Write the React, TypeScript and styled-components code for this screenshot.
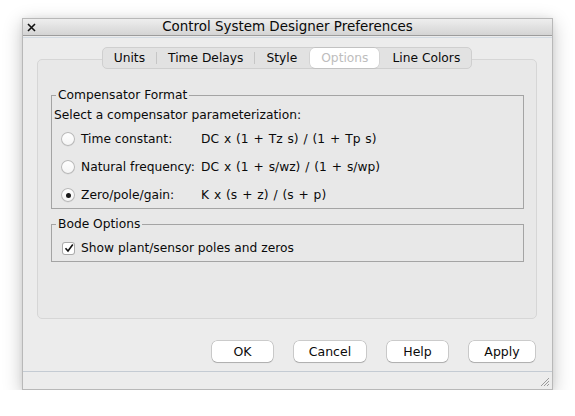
import React from "react";
import styled, { createGlobalStyle } from "styled-components";

const Global = createGlobalStyle`
  html, body { margin: 0; padding: 0; background: #ffffff; }
  body { font-family: "DejaVu Sans", "Open Sans", sans-serif; color: #0a0a0a; }
  * { box-sizing: border-box; }
`;

const Window = styled.div`
  margin: 18px 0 0 22px;
  width: 531px;
  height: 372px;
  border: 1px solid #b8b8b8;
  background: #ececec;
  box-shadow: 0 5px 18px rgba(0, 0, 0, 0.24), 0 0 6px rgba(0, 0, 0, 0.06);
  display: flex;
  flex-direction: column;
`;

const TitleBar = styled.div`
  height: 17px;
  display: grid;
  grid-template-columns: 24px 1fr 24px;
  align-items: center;
  background: linear-gradient(#eeeeee, #d4d4d4);
  border-bottom: 1px solid #9c9c9c;
`;

const CloseBox = styled.div`
  display: flex;
  align-items: center;
  padding-left: 4px;
`;

const Title = styled.div`
  text-align: center;
  font-size: 13.45px;
  line-height: 16px;
  color: #0a0a0a;
`;

const TitleRule = styled.div`
  height: 1px;
  margin-top: 1px;
  background: #d3dbe3;
`;

const Content = styled.div`
  padding: 9px 15px 0 14px;
  display: flex;
  flex-direction: column;
`;

const TabBar = styled.div`
  align-self: center;
  position: relative;
  z-index: 1;
  height: 22px;
  display: flex;
  align-items: center;
  border: 1px solid #cfcfcf;
  border-radius: 5px;
  background: #e2e2e2;
`;

const Tab = styled.div<{ $active?: boolean }>`
  height: 20px;
  padding: 0 11px;
  margin: ${(p) => (p.$active ? "0 2px" : "0")};
  display: flex;
  align-items: center;
  font-size: 12.25px;
  color: ${(p) => (p.$active ? "#bdbdbd" : "#0a0a0a")};
  background: ${(p) => (p.$active ? "#ffffff" : "transparent")};
  border-radius: 5px;
  box-shadow: ${(p) => (p.$active ? "0 0 0 0.5px rgba(0,0,0,0.12)" : "none")};
`;

const TabSep = styled.div`
  width: 1px;
  height: 12px;
  background: #c6c6c6;
`;

const Panel = styled.div`
  margin-top: -10px;
  height: 260px;
  border: 1px solid #d6d6d6;
  border-radius: 5px;
  background: #e8e8e8;
  padding: 28px 12px 0 13px;
  display: flex;
  flex-direction: column;
`;

const Group = styled.fieldset<{ $gapTop?: number }>`
  margin: ${(p) => p.$gapTop ?? 0}px 0 0 0;
  border: 1px solid #a4a4a4;
  padding: 0 2px 5px 2px;
  min-width: 0;
`;

const Legend = styled.legend`
  padding: 0 2px;
  margin-left: 2px;
  font-size: 12.25px;
  line-height: 14px;
`;

const Prompt = styled.div`
  margin-top: 5px;
  font-size: 12.25px;
  line-height: 16px;
`;

const RadioGrid = styled.div`
  margin: 8px 0 0 7px;
  display: grid;
  grid-template-columns: 14px 120px auto;
  grid-auto-rows: 16px;
  column-gap: 6px;
  row-gap: 12px;
  align-items: center;
  font-size: 12.25px;
`;

const RadioLabel = styled.span`
  white-space: nowrap;
`;

const Formula = styled.span`
  margin-left: -6px;
  white-space: nowrap;
  word-spacing: 1px;
`;

const Radio = styled.span<{ $checked?: boolean }>`
  width: 14px;
  height: 14px;
  border-radius: 50%;
  background: linear-gradient(#ffffff, #f4f4f4);
  box-shadow: inset 0 0 0 1px #b7b7b7, 0 0.5px 0.5px rgba(0, 0, 0, 0.08);
  display: flex;
  align-items: center;
  justify-content: center;
  &::after {
    content: "";
    width: 5px;
    height: 5px;
    border-radius: 50%;
    background: ${(p) => (p.$checked ? "#1a1a1a" : "transparent")};
  }
`;

const CheckRow = styled.div`
  margin: 9px 0 0 8px;
  height: 16px;
  display: flex;
  align-items: center;
  gap: 6px;
  font-size: 12.25px;
`;

const CheckBox = styled.span`
  width: 13px;
  height: 13px;
  border-radius: 3px;
  background: #ffffff;
  box-shadow: inset 0 0 0 1px #ababab;
  display: flex;
  align-items: center;
  justify-content: center;
`;

const ButtonRow = styled.div`
  margin-top: 22px;
  padding-right: 2px;
  display: flex;
  justify-content: flex-end;
  gap: 21px;
`;

const Button = styled.button<{ $w: number }>`
  width: ${(p) => p.$w}px;
  height: 21px;
  padding: 0;
  border: none;
  border-radius: 5px;
  background: #ffffff;
  box-shadow: 0 0 0 0.5px rgba(0, 0, 0, 0.28), 0 1px 1px rgba(0, 0, 0, 0.14);
  font-family: "DejaVu Sans", sans-serif;
  font-size: 12.5px;
  color: #0a0a0a;
`;

const Footer = styled.div`
  margin-top: 9px;
  flex: 1;
  border-top: 1px solid #c4cbd3;
  display: flex;
  justify-content: flex-end;
  align-items: flex-end;
  padding: 0 2px 2px 0;
`;

const tabs = ["Units", "Time Delays", "Style", "Options", "Line Colors"];
const active = 3;

const options = [
  { label: "Time constant:", formula: "DC x (1 + Tz s) / (1 + Tp s)", checked: false },
  { label: "Natural frequency:", formula: "DC x (1 + s/wz) / (1 + s/wp)", checked: false },
  { label: "Zero/pole/gain:", formula: "K x (s + z) / (s + p)", checked: true },
];

const buttons: [string, number][] = [
  ["OK", 61],
  ["Cancel", 72],
  ["Help", 61],
  ["Apply", 66],
];

export default function App() {
  return (
    <>
      <Global />
      <Window>
        <TitleBar>
          <CloseBox>
            <svg width="9" height="9" viewBox="0 0 9 9">
              <path d="M1 1 L8 8 M8 1 L1 8" stroke="#111" strokeWidth="1.6" />
            </svg>
          </CloseBox>
          <Title>Control System Designer Preferences</Title>
          <span />
        </TitleBar>
        <TitleRule />
        <Content>
          <TabBar>
            {tabs.map((t, i) => (
              <React.Fragment key={t}>
                {i > 0 && i !== active && i - 1 !== active && <TabSep />}
                <Tab $active={i === active}>{t}</Tab>
              </React.Fragment>
            ))}
          </TabBar>
          <Panel>
            <Group>
              <Legend>Compensator Format</Legend>
              <Prompt>Select a compensator parameterization:</Prompt>
              <RadioGrid>
                {options.map((o) => (
                  <React.Fragment key={o.label}>
                    <Radio $checked={o.checked} />
                    <RadioLabel>{o.label}</RadioLabel>
                    <Formula>{o.formula}</Formula>
                  </React.Fragment>
                ))}
              </RadioGrid>
            </Group>
            <Group $gapTop={8}>
              <Legend>Bode Options</Legend>
              <CheckRow>
                <CheckBox>
                  <svg width="10" height="10" viewBox="0 0 10 10">
                    <path d="M1.5 5.2 L4 8 L8.8 1.5" fill="none" stroke="#111" strokeWidth="1.6" />
                  </svg>
                </CheckBox>
                Show plant/sensor poles and zeros
              </CheckRow>
            </Group>
          </Panel>
          <ButtonRow>
            {buttons.map(([b, w]) => (
              <Button key={b} $w={w}>
                {b}
              </Button>
            ))}
          </ButtonRow>
        </Content>
        <Footer>
          <svg width="11" height="11" viewBox="0 0 11 11">
            <path d="M10 2 L2 10 M10 5 L5 10 M10 8 L8 10" stroke="#9a9a9a" strokeWidth="1" />
          </svg>
        </Footer>
      </Window>
    </>
  );
}
